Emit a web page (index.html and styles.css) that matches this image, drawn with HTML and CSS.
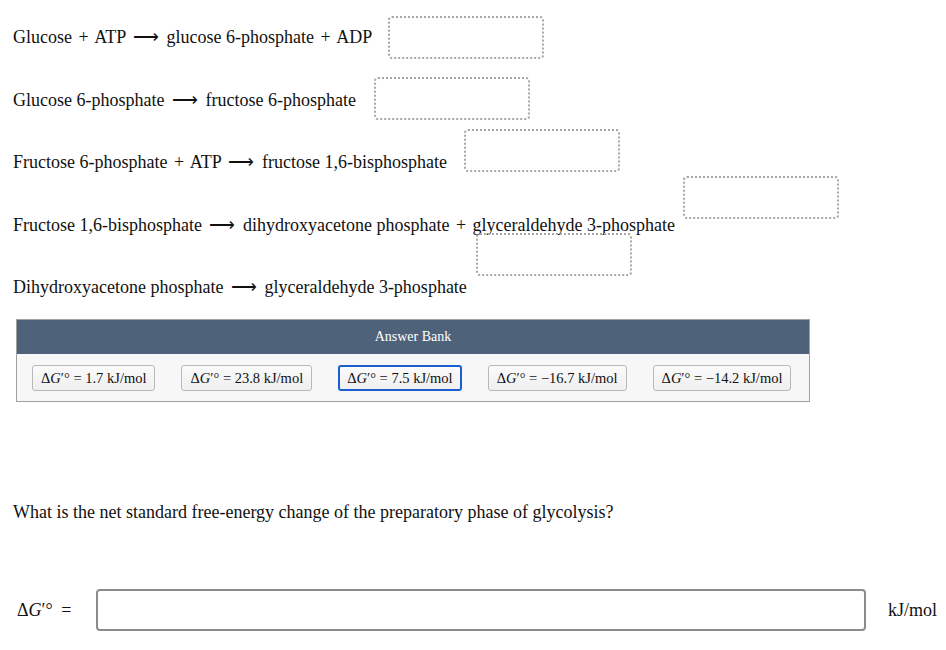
FILE: index.html
```html
<!DOCTYPE html>
<html>
<head>
<meta charset="utf-8">
<link rel="stylesheet" href="styles.css">
</head>
<body>
<div class="reactions">
  <div class="row">
    <span class="eq">Glucose <span class="op">+</span> ATP <span class="arrow">⟶</span> glucose 6-phosphate <span class="op">+</span> ADP</span>
    <span class="drop d1"></span>
  </div>
  <div class="row">
    <span class="eq">Glucose 6-phosphate <span class="arrow">⟶</span> fructose 6-phosphate</span>
    <span class="drop d2"></span>
  </div>
  <div class="row">
    <span class="eq">Fructose 6-phosphate <span class="op">+</span> ATP <span class="arrow">⟶</span> fructose 1,6-bisphosphate</span>
    <span class="drop d3"></span>
  </div>
  <div class="row">
    <span class="eq">Fructose 1,6-bisphosphate <span class="arrow">⟶</span> dihydroxyacetone phosphate <span class="op">+</span> glyceraldehyde 3-phosphate</span>
    <span class="drop d4"></span>
  </div>
  <div class="row">
    <span class="eq">Dihydroxyacetone phosphate <span class="arrow">⟶</span> glyceraldehyde 3-phosphate</span>
    <span class="drop d5"></span>
  </div>
</div>

<div class="bank">
  <div class="bank-head">Answer Bank</div>
  <div class="bank-body">
    <span class="chip">Δ<i>G</i>′° <span class="eqs">=</span> 1.7 kJ/mol</span>
    <span class="chip">Δ<i>G</i>′° <span class="eqs">=</span> 23.8 kJ/mol</span>
    <span class="chip chip-focus">Δ<i>G</i>′° <span class="eqs">=</span> 7.5 kJ/mol</span>
    <span class="chip">Δ<i>G</i>′° <span class="eqs">=</span> −16.7 kJ/mol</span>
    <span class="chip">Δ<i>G</i>′° <span class="eqs">=</span> −14.2 kJ/mol</span>
  </div>
</div>

<p class="question">What is the net standard free-energy change of the preparatory phase of glycolysis?</p>

<div class="answer">
  <span class="label">Δ<i>G</i>′° <span class="label-eq">=</span></span>
  <span class="input"></span>
  <span class="unit">kJ/mol</span>
</div>
</body>
</html>
```

FILE: styles.css
```css
html, body {
  margin: 0;
  padding: 0;
  background: #ffffff;
}
body {
  font-family: "Liberation Serif", "Times New Roman", serif;
  font-size: 18px;
  color: #111;
  width: 946px;
}
.reactions {
  padding-top: 5.75px;
  padding-left: 13px;
}
.row {
  height: 62.5px;
  display: flex;
  align-items: center;
}
.eq {
  white-space: nowrap;
  line-height: 20px;
}
.op {
  display: inline-block;
  margin: 0 2px;
}
.arrow {
  display: inline-block;
  margin: 0 3px;
}
.drop {
  display: block;
  width: 152px;
  height: 39px;
  border: 2px dotted #a8a8a8;
  border-radius: 4px;
  flex: none;
}
.d1 { margin-left: 16px; }
.d2 { margin-left: 18px; margin-top: -3px; }
.d3 { margin-left: 17px; margin-top: -24px; }
.d4 { margin-left: 8px; margin-top: -54px; }
.d5 { margin-left: 9px; margin-top: -66px; position: relative; }

.bank {
  margin: 1px 0 0 16px;
  width: 792px;
  border: 1px solid #a0a0a0;
  background: #f7f7f7;
}
.bank-head {
  background: #4e6379;
  color: #ffffff;
  height: 34px;
  line-height: 34px;
  text-align: center;
  font-size: 14px;
}
.bank-body {
  display: flex;
  gap: 26px;
  padding: 11px 15px 10px 15px;
}
.chip {
  display: inline-flex;
  align-items: center;
  height: 24px;
  padding: 0 8px;
  border: 1px solid #b9b9b9;
  border-radius: 3px;
  background: linear-gradient(#fbfbfb, #efefef);
  font-size: 14.5px;
  white-space: pre;
}
.chip-focus {
  border: 2px solid #1b5ed1;
  padding: 0 7px;
  height: 22px;
}

.question {
  margin: 100px 0 0 13px;
  line-height: 20px;
}

.answer {
  display: flex;
  align-items: center;
  margin-top: 67px;
  padding-left: 17px;
}
.label {
  width: 79px;
  white-space: nowrap;
}
.label-eq {
  margin-left: 4px;
}
.input {
  display: block;
  width: 766px;
  height: 38px;
  border: 2px solid #8c8c8c;
  border-radius: 4px;
  background: #fff;
}
.unit {
  margin-left: 22px;
}
```
